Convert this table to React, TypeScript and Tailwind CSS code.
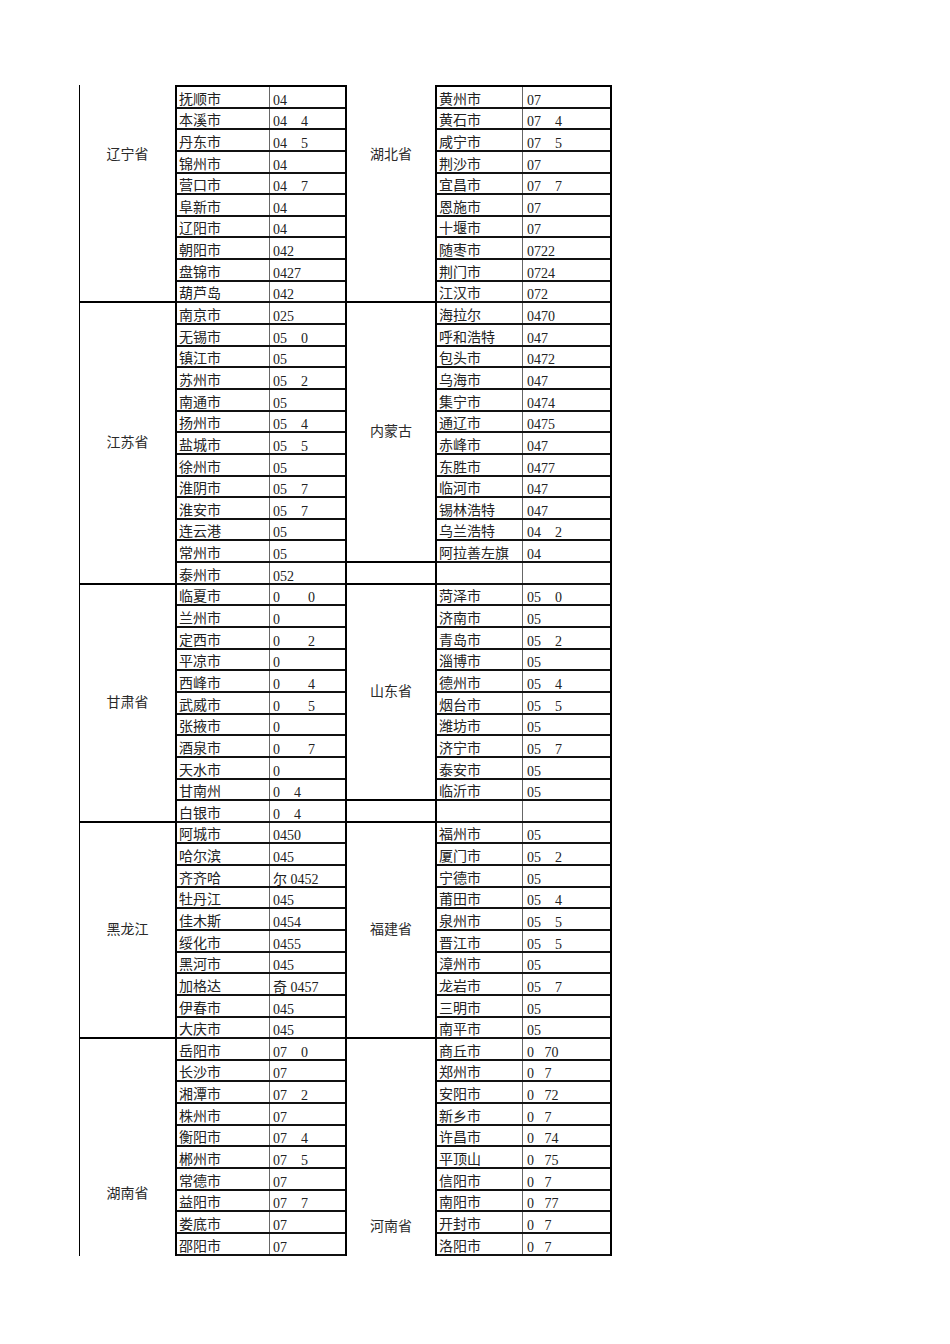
import * as React from "react";

type Row = [string, string];
type Group = { name: string; pos: string; rows: Row[] };

const leftGroups: Group[] = [
  {
    name: "辽宁省",
    pos: "pt-[63px]",
    rows: [
      ["抚顺市", "04"],
      ["本溪市", "04    4"],
      ["丹东市", "04    5"],
      ["锦州市", "04"],
      ["营口市", "04    7"],
      ["阜新市", "04"],
      ["辽阳市", "04"],
      ["朝阳市", "042"],
      ["盘锦市", "0427"],
      ["葫芦岛", "042"],
    ],
  },
  {
    name: "江苏省",
    pos: "justify-center",
    rows: [
      ["南京市", "025"],
      ["无锡市", "05    0"],
      ["镇江市", "05"],
      ["苏州市", "05    2"],
      ["南通市", "05"],
      ["扬州市", "05    4"],
      ["盐城市", "05    5"],
      ["徐州市", "05"],
      ["淮阴市", "05    7"],
      ["淮安市", "05    7"],
      ["连云港", "05"],
      ["常州市", "05"],
      ["泰州市", "052"],
    ],
  },
  {
    name: "甘肃省",
    pos: "justify-center",
    rows: [
      ["临夏市", "0        0"],
      ["兰州市", "0"],
      ["定西市", "0        2"],
      ["平凉市", "0"],
      ["西峰市", "0        4"],
      ["武威市", "0        5"],
      ["张掖市", "0"],
      ["酒泉市", "0        7"],
      ["天水市", "0"],
      ["甘南州", "0    4"],
      ["白银市", "0    4"],
    ],
  },
  {
    name: "黑龙江",
    pos: "justify-center",
    rows: [
      ["阿城市", "0450"],
      ["哈尔滨", "045"],
      ["齐齐哈", "尔 0452"],
      ["牡丹江", "045"],
      ["佳木斯", "0454"],
      ["绥化市", "0455"],
      ["黑河市", "045"],
      ["加格达", "奇 0457"],
      ["伊春市", "045"],
      ["大庆市", "045"],
    ],
  },
  {
    name: "湖南省",
    pos: "pt-[148px]",
    rows: [
      ["岳阳市", "07    0"],
      ["长沙市", "07"],
      ["湘潭市", "07    2"],
      ["株州市", "07"],
      ["衡阳市", "07    4"],
      ["郴州市", "07    5"],
      ["常德市", "07"],
      ["益阳市", "07    7"],
      ["娄底市", "07"],
      ["邵阳市", "07"],
    ],
  },
];

const rightGroups: Group[] = [
  {
    name: "湖北省",
    pos: "pt-[63px]",
    rows: [
      ["黄州市", "07"],
      ["黄石市", "07    4"],
      ["咸宁市", "07    5"],
      ["荆沙市", "07"],
      ["宜昌市", "07    7"],
      ["恩施市", "07"],
      ["十堰市", "07"],
      ["随枣市", "0722"],
      ["荆门市", "0724"],
      ["江汉市", "072"],
    ],
  },
  {
    name: "内蒙古",
    pos: "justify-center",
    rows: [
      ["海拉尔", "0470"],
      ["呼和浩特", "047"],
      ["包头市", "0472"],
      ["乌海市", "047"],
      ["集宁市", "0474"],
      ["通辽市", "0475"],
      ["赤峰市", "047"],
      ["东胜市", "0477"],
      ["临河市", "047"],
      ["锡林浩特", "047"],
      ["乌兰浩特", "04    2"],
      ["阿拉善左旗", "04"],
    ],
  },
  { name: "", pos: "justify-center", rows: [["", ""]] },
  {
    name: "山东省",
    pos: "justify-center",
    rows: [
      ["菏泽市", "05    0"],
      ["济南市", "05"],
      ["青岛市", "05    2"],
      ["淄博市", "05"],
      ["德州市", "05    4"],
      ["烟台市", "05    5"],
      ["潍坊市", "05"],
      ["济宁市", "05    7"],
      ["泰安市", "05"],
      ["临沂市", "05"],
    ],
  },
  { name: "", pos: "justify-center", rows: [["", ""]] },
  {
    name: "福建省",
    pos: "justify-center",
    rows: [
      ["福州市", "05"],
      ["厦门市", "05    2"],
      ["宁德市", "05"],
      ["莆田市", "05    4"],
      ["泉州市", "05    5"],
      ["晋江市", "05    5"],
      ["漳州市", "05"],
      ["龙岩市", "05    7"],
      ["三明市", "05"],
      ["南平市", "05"],
    ],
  },
  {
    name: "河南省",
    pos: "pt-[181px]",
    rows: [
      ["商丘市", "0   70"],
      ["郑州市", "0   7"],
      ["安阳市", "0   72"],
      ["新乡市", "0   7"],
      ["许昌市", "0   74"],
      ["平顶山", "0   75"],
      ["信阳市", "0   7"],
      ["南阳市", "0   77"],
      ["开封市", "0   7"],
      ["洛阳市", "0   7"],
    ],
  },
];

const cjk = "font-['Liberation_Serif','Noto_Sans_CJK_SC',serif]";

function Half({ groups, side }: { groups: Group[]; side: "left" | "right" }) {
  const isLeft = side === "left";
  return (
    <div className="flex flex-col">
      {groups.map((g, gi) => {
        const last = gi === groups.length - 1;
        const provClass = [
          "flex flex-col items-center border-black",
          isLeft ? "w-[96px] border-l-[1.5px]" : "w-[88px]",
          last ? "" : "border-b-2",
          g.pos,
        ].join(" ");
        const rowsClass = [
          "flex flex-col border-x-2 border-black",
          gi === 0 ? "border-t-2" : "",
        ].join(" ");
        return (
          <div key={gi} className="flex">
            <div className={provClass}>
              <span className="text-[14px] leading-[14px] text-[#2a2a2a]">{g.name}</span>
            </div>
            <div className={rowsClass}>
              {g.rows.map(([city, code], ri) => (
                <div key={ri} className="flex h-[21.65px] border-b-2 border-[#111]">
                  <div
                    className={
                      (isLeft ? "w-[93px] " : "w-[86px] ") +
                      "flex items-end border-r border-[#666] pl-[2px]"
                    }
                  >
                    <span className="whitespace-nowrap text-[14px] leading-[14px] text-[#222]">
                      {city}
                    </span>
                  </div>
                  <div
                    className={
                      (isLeft ? "w-[75px] pl-[3px] " : "w-[87px] pl-[4px] ") +
                      "flex items-end"
                    }
                  >
                    <span className="translate-y-[1px] whitespace-pre text-[14px] leading-[14px] text-[#222]">
                      {code}
                    </span>
                  </div>
                </div>
              ))}
            </div>
          </div>
        );
      })}
    </div>
  );
}

export default function App() {
  return (
    <div className={"min-h-[1344px] w-[950px] bg-white " + cjk}>
      <div className="flex pl-[79px] pt-[85px]">
        <Half groups={leftGroups} side="left" />
        <Half groups={rightGroups} side="right" />
      </div>
    </div>
  );
}
